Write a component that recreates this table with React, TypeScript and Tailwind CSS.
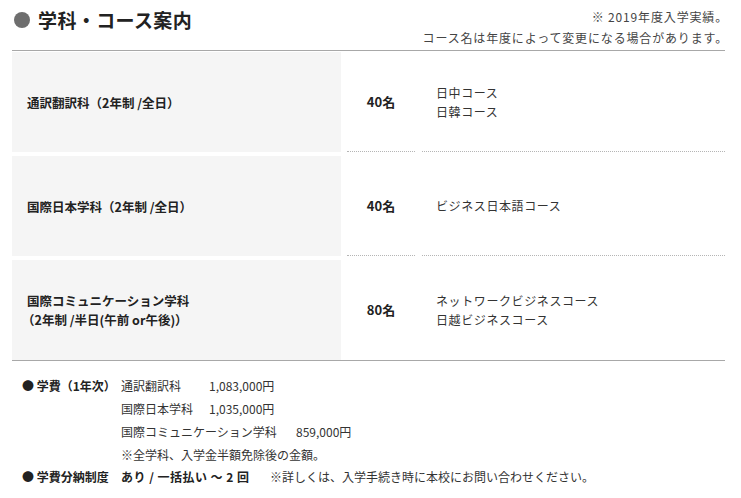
const courses = [
  { name: ["通訳翻訳科（2年制 /全日）"], cap: "40名", list: ["日中コース", "日韓コース"] },
  { name: ["国際日本学科（2年制 /全日）"], cap: "40名", list: ["ビジネス日本語コース"] },
  {
    name: ["国際コミュニケーション学科", "（2年制 /半日(午前 or午後)）"],
    cap: "80名",
    list: ["ネットワークビジネスコース", "日越ビジネスコース"],
  },
];

const font = { fontFamily: '"Noto Sans CJK JP", "Noto Sans", sans-serif' };

export default function App() {
  return (
    <div className="w-[741px] h-[498px] bg-white text-[#333] pl-[12px] pr-[16px]" style={font}>
      {/* header */}
      <div className="flex justify-between items-start h-[50px]">
        <div className="flex items-center pt-[8px] pl-[2px]">
          <span className="w-[16px] h-[16px] rounded-full bg-[#6e6e6e]" />
          <h2 className="ml-[8px] text-[19px] leading-[24px] font-bold text-[#222] tracking-[0.02em]">
            学科・コース案内
          </h2>
        </div>
        <div className="text-right text-[12px] leading-[21px] tracking-[0.07em] text-[#444] pt-[6px] -mr-[3px]">
          <p>※ 2019年度入学実績。</p>
          <p>コース名は年度によって変更になる場合があります。</p>
        </div>
      </div>

      {/* course table */}
      <div className="border-t border-b border-[#a8a8a8] pt-[1px] flex flex-col gap-[4px]">
        {courses.map((c, i) => (
          <div key={i} className="flex h-[100px]">
            <div className="w-[329px] bg-[#f5f5f5] flex flex-col justify-center pl-[15px] text-[12.5px] leading-[19px] font-bold text-[#222]">
              {c.name.map(n => (
                <p key={n} className={n.startsWith("（") ? "-ml-[5px]" : ""}>{n}</p>
              ))}
            </div>
            <div
              className={`ml-[6px] w-[68px] flex items-center justify-center text-[13px] font-bold text-[#222] ${
                i < courses.length - 1 ? "border-b border-dotted border-[#b5b5b5]" : ""
              }`}
            >
              {c.cap}
            </div>
            <div
              className={`ml-[7px] flex-1 flex flex-col justify-center pl-[14px] text-[12px] leading-[19px] tracking-[0.05em] text-[#333] ${
                i < courses.length - 1 ? "border-b border-dotted border-[#b5b5b5]" : ""
              }`}
            >
              {c.list.map(l => (
                <p key={l}>{l}</p>
              ))}
            </div>
          </div>
        ))}
      </div>

      {/* fees */}
      <div className="pt-[13px] pl-[10px] text-[12px] leading-[23px] text-[#333]">
        <div className="flex">
          <div className="w-[99px] font-bold text-[#222]">● 学費（1年次）</div>
          <div>
            <div className="flex">
              <span className="w-[88px]">通訳翻訳科</span>
              <span>1,083,000円</span>
            </div>
            <div className="flex">
              <span className="w-[88px]">国際日本学科</span>
              <span>1,035,000円</span>
            </div>
            <div className="flex">
              <span className="w-[175px]">国際コミュニケーション学科</span>
              <span>859,000円</span>
            </div>
            <div>※全学科、入学金半額免除後の金額。</div>
          </div>
        </div>
        <div className="flex leading-[21px]">
          <div className="w-[99px] font-bold text-[#222]">● 学費分納制度</div>
          <div className="w-[149px] font-bold text-[#222] tracking-[0.04em]">あり / 一括払い 〜 2 回</div>
          <div>※詳しくは、入学手続き時に本校にお問い合わせください。</div>
        </div>
      </div>
    </div>
  );
}
